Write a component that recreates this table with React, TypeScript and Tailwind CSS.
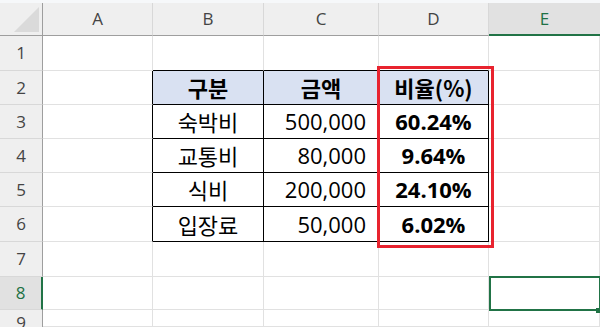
import type { ReactNode } from "react";

const COLS = ["A", "B", "C", "D", "E"];
const ROW_HEIGHTS = [35, 34, 34, 34, 34, 35, 35, 33, 17];

type Row = { label: string; amount: string; ratio: string };

const ROWS: Row[] = [
  { label: "숙박비", amount: "500,000", ratio: "60.24%" },
  { label: "교통비", amount: "80,000", ratio: "9.64%" },
  { label: "식비", amount: "200,000", ratio: "24.10%" },
  { label: "입장료", amount: "50,000", ratio: "6.02%" },
];

const KR = "font-['Noto_Sans_CJK_KR','Noto_Sans',sans-serif]";
const UI = "font-['Open_Sans','Noto_Sans',sans-serif]";

// Each cell owns its right + bottom edge; black edges mark the table box.
function Cell({
  children,
  right = false,
  bottom = false,
  className = "",
}: {
  children?: ReactNode;
  right?: boolean;
  bottom?: boolean;
  className?: string;
}) {
  return (
    <div
      className={`flex items-center overflow-hidden border-r border-b ${
        right ? "border-r-black" : "border-r-[#e1e1e1]"
      } ${bottom ? "border-b-black" : "border-b-[#e1e1e1]"} ${className}`}
    >
      {children}
    </div>
  );
}

function RowHeader({ n, active }: { n: number; active?: boolean }) {
  return (
    <div
      className={`flex items-center justify-center border-b border-b-[#d8d8d8] text-[17px] ${UI} ${
        active
          ? "border-r-2 border-r-[#217346] bg-[#e1e1e1] text-[#1e7145]"
          : "border-r border-r-[#9e9e9e] bg-[#efefef] text-[#444]"
      }`}
    >
      {n}
    </div>
  );
}

export default function App() {
  return (
    <div className="relative h-[327px] w-[600px] overflow-hidden bg-white">
      <div className="h-[3px] bg-[#f6f8fa]" />
      <div className="grid grid-cols-[43px_110px_111px_115px_110px_111px]">
        {/* column headers */}
        <div className="relative h-[33px] border-r border-b border-[#9e9e9e] bg-[#efefef]">
          <div className="absolute right-[3px] bottom-[3px] h-0 w-0 border-b-[25px] border-l-[25px] border-b-[#dadada] border-l-transparent" />
        </div>
        {COLS.map((c) =>
          c === "E" ? (
            <div
              key={c}
              className={`flex h-[33px] items-center justify-center border-b-2 border-b-[#217346] bg-[#e1e1e1] text-[17px] text-[#1e7145] ${UI}`}
            >
              {c}
            </div>
          ) : (
            <div
              key={c}
              className={`flex h-[33px] items-center justify-center border-r border-b border-r-[#d8d8d8] border-b-[#9e9e9e] bg-[#efefef] text-[17px] text-[#444] ${UI}`}
            >
              {c}
            </div>
          ),
        )}

        {ROW_HEIGHTS.map((h, i) => {
          const r = i + 1;
          const inTable = r >= 2 && r <= 6;
          const head = r === 2;
          const edgeB = r >= 1 && r <= 6;
          const data = r >= 3 && r <= 6 ? ROWS[r - 3] : null;
          const fill = head ? "bg-[#d9e1f2]" : "";
          return (
            <div key={r} className="contents">
              <div style={{ height: h }} className="grid">
                <RowHeader n={r} active={r === 8} />
              </div>
              <Cell right={inTable} />
              <Cell
                right={inTable}
                bottom={edgeB}
                className={`justify-center text-[22px] text-black ${KR} ${fill} ${
                  head ? "font-bold" : ""
                }`}
              >
                {head ? "구분" : data?.label}
              </Cell>
              <Cell
                right={inTable}
                bottom={edgeB}
                className={`text-[22px] text-black ${fill} ${
                  head ? `justify-center font-bold ${KR}` : `justify-end pr-[12px] ${UI}`
                }`}
              >
                {head ? "금액" : data?.amount}
              </Cell>
              <Cell
                right={inTable}
                bottom={edgeB}
                className={`justify-center text-[22px] font-bold text-black ${fill} ${
                  head ? KR : UI
                }`}
              >
                {head ? "비율(%)" : data?.ratio}
              </Cell>
              <Cell />
            </div>
          );
        })}
      </div>

      {/* highlight around column D */}
      <div className="pointer-events-none absolute top-[66px] left-[377px] h-[182px] w-[117px] border-[3px] border-[#e8232f]" />

      {/* active cell E8 */}
      <div className="pointer-events-none absolute top-[276px] left-[489px] h-[35px] w-[112px] border-2 border-[#217346]">
        <div className="absolute right-[-2px] bottom-[-4px] h-[5px] w-[5px] bg-[#217346]" />
      </div>
    </div>
  );
}
